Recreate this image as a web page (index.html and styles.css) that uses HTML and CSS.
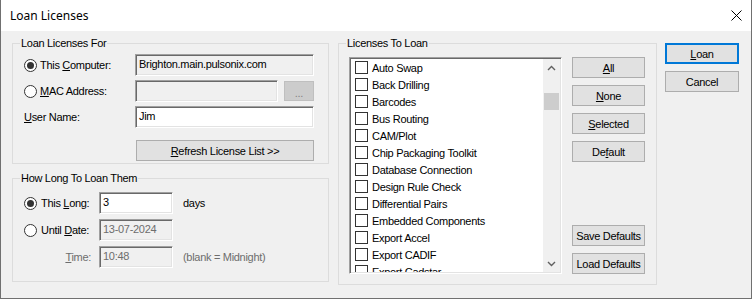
FILE: index.html
```html
<!DOCTYPE html>
<html>
<head>
<meta charset="utf-8">
<title>Loan Licenses</title>
<link rel="stylesheet" href="styles.css">
</head>
<body>
<div class="window">
  <div class="titlebar">
    <span class="title">Loan Licenses</span>
    <svg class="close" width="11" height="11" viewBox="0 0 11 11"><path d="M0.5 0.5 L10.5 10.5 M10.5 0.5 L0.5 10.5" stroke="#000" stroke-width="1"/></svg>
  </div>
  <div class="body">
    <div class="left">
      <fieldset class="group g1">
        <legend>Loan Licenses For</legend>
        <div class="inner form1">
          <div class="radio"><span class="rb on"></span><span>This <u>C</u>omputer:</span></div>
          <div class="field ro">Brighton.main.pulsonix.com</div>
          <div class="radio"><span class="rb"></span><span><u>M</u>AC Address:</span></div>
          <div class="macrow"><div class="field ro mac"></div><div class="btn dis">...</div></div>
          <div class="plain"><u>U</u>ser Name:</div>
          <div class="field">Jim</div>
          <div></div>
          <div class="btn refresh"><u>R</u>efresh License List &gt;&gt;</div>
        </div>
      </fieldset>
      <fieldset class="group g2">
        <legend>How Long To Loan Them</legend>
        <div class="inner form2">
          <div class="radio"><span class="rb on"></span><span>This <u>L</u>ong:</span></div>
          <div class="field">3</div>
          <div class="note">days</div>
          <div class="radio"><span class="rb"></span><span>Until <u>D</u>ate:</span></div>
          <div class="field ro grey">13-07-2024</div>
          <div></div>
          <div class="plain grey tlabel"><u>T</u>ime:</div>
          <div class="field ro grey">10:48</div>
          <div class="note grey">(blank = Midnight)</div>
        </div>
      </fieldset>
    </div>
    <fieldset class="group g3">
      <legend>Licenses To Loan</legend>
      <div class="inner lic">
        <div class="listbox">
          <div class="items">
            <div class="item"><span class="cb"></span>Auto Swap</div>
            <div class="item"><span class="cb"></span>Back Drilling</div>
            <div class="item"><span class="cb"></span>Barcodes</div>
            <div class="item"><span class="cb"></span>Bus Routing</div>
            <div class="item"><span class="cb"></span>CAM/Plot</div>
            <div class="item"><span class="cb"></span>Chip Packaging Toolkit</div>
            <div class="item"><span class="cb"></span>Database Connection</div>
            <div class="item"><span class="cb"></span>Design Rule Check</div>
            <div class="item"><span class="cb"></span>Differential Pairs</div>
            <div class="item"><span class="cb"></span>Embedded Components</div>
            <div class="item"><span class="cb"></span>Export Accel</div>
            <div class="item"><span class="cb"></span>Export CADIF</div>
            <div class="item"><span class="cb"></span>Export Cadstar</div>
          </div>
          <div class="scrollbar">
            <div class="arrow"><svg width="9" height="6" viewBox="0 0 9 6"><path d="M1 5 L4.5 1.5 L8 5" fill="none" stroke="#606060" stroke-width="1.4"/></svg></div>
            <div class="track"><div class="thumb"></div></div>
            <div class="arrow"><svg width="9" height="6" viewBox="0 0 9 6"><path d="M1 1 L4.5 4.5 L8 1" fill="none" stroke="#606060" stroke-width="1.4"/></svg></div>
          </div>
        </div>
        <div class="sidebtns">
          <div class="btngroup">
            <div class="btn"><u>A</u>ll</div>
            <div class="btn"><u>N</u>one</div>
            <div class="btn"><u>S</u>elected</div>
            <div class="btn">De<u>f</u>ault</div>
          </div>
          <div class="btngroup">
            <div class="btn">Save Defaults</div>
            <div class="btn">Load Defaults</div>
          </div>
        </div>
      </div>
    </fieldset>
    <div class="right">
      <div class="btn default"><u>L</u>oan</div>
      <div class="btn">Cancel</div>
    </div>
  </div>
</div>
</body>
</html>
```

FILE: styles.css
```css
* { box-sizing: border-box; }
html, body { margin: 0; padding: 0; }
body {
  width: 752px;
  height: 299px;
  overflow: hidden;
  background: #f0f0f0;
  font-family: "Liberation Sans", Arial, sans-serif;
  font-size: 11px;
  letter-spacing: -0.3px;
  color: #000;
}
u { text-decoration: underline; text-underline-offset: 1px; }

.window {
  width: 752px;
  height: 299px;
  border: 1px solid #707070;
  border-top: none;
  display: flex;
  flex-direction: column;
  background: #f0f0f0;
}
.titlebar {
  height: 31px;
  flex: none;
  background: #fff;
  display: flex;
  align-items: center;
  justify-content: space-between;
  padding: 0 9px 0 9px;
}
.title {
  font-family: "Noto Sans", "Liberation Sans", sans-serif;
  font-size: 12px;
  letter-spacing: 0;
  padding-bottom: 1px;
}
.close { display: block; margin-bottom: 1px; }

.body {
  flex: 1;
  display: flex;
  align-items: flex-start;
  padding: 6px 0 0 11px;
}
.left {
  width: 317px;
  display: flex;
  flex-direction: column;
  gap: 8px;
}

.group {
  margin: 0;
  padding: 0;
  border: 1px solid #dcdcdc;
  min-width: 0;
}
.group legend {
  margin-left: 7px;
  padding: 0 1px;
  height: 13px;
  line-height: 13px;
}

/* group 1 */
.form1 {
  display: grid;
  grid-template-columns: 111px 179px;
  grid-auto-rows: 22px;
  row-gap: 4px;
  padding: 4px 14px 9px 11px;
  align-items: center;
}
.radio { display: flex; align-items: center; height: 22px; }
.rb {
  width: 13px;
  height: 13px;
  border: 1px solid #333;
  border-radius: 50%;
  background: #fff;
  margin-right: 3px;
  flex: none;
  display: flex;
  align-items: center;
  justify-content: center;
}
.rb.on::after {
  content: "";
  width: 7px;
  height: 7px;
  border-radius: 50%;
  background: #333;
}
.plain { height: 22px; line-height: 22px; }

.field {
  height: 22px;
  border: 1px solid;
  border-color: #a0a0a0 #ffffff #ffffff #a0a0a0;
  box-shadow: inset 1px 1px 0 #696969, inset -1px -1px 0 #e3e3e3;
  background: #fff;
  padding: 0 3px;
  line-height: 19px;
  white-space: nowrap;
  overflow: hidden;
}
.field.ro { background: #f0f0f0; }
.grey { color: #6d6d6d; }

.macrow { display: flex; gap: 6px; align-items: center; }
.mac { width: 143px; }

.btn {
  height: 21px;
  border: 1px solid #adadad;
  background: #e1e1e1;
  display: flex;
  align-items: center;
  justify-content: center;
  white-space: nowrap;
}
.btn.dis {
  width: 30px;
  height: 20px;
  background: #cccccc;
  border-color: #bfbfbf;
  color: #838383;
  align-items: flex-end;
  padding-bottom: 2px;
  line-height: 10px;
}
.refresh { margin-top: 8px; width: 178px; margin-left: 1px; align-self: start; }

/* group 2 */
.form2 {
  display: grid;
  grid-template-columns: 75px 74px auto;
  grid-auto-rows: 22px;
  row-gap: 5px;
  padding: 7px 0 13px 11px;
  align-items: center;
}
.form2 .radio .rb { margin-right: 4px; }
.tlabel { justify-self: end; padding-right: 8px; }
.note { line-height: 22px; padding-left: 10px; }

/* group 3 */
.g3 { width: 319px; margin-left: 9px; }
.lic {
  display: flex;
  gap: 10px;
  padding: 7px 11px 10px 10px;
}
.listbox {
  width: 213px;
  height: 217px;
  border: 1px solid;
  border-color: #a0a0a0 #ffffff #ffffff #a0a0a0;
  box-shadow: inset 1px 1px 0 #696969, inset -1px -1px 0 #e3e3e3;
  background: #fff;
  padding: 1px;
  display: flex;
}
.items {
  flex: 1;
  overflow: hidden;
  padding-left: 4px;
}
.item {
  height: 17px;
  display: flex;
  align-items: center;
  white-space: nowrap;
}
.cb {
  width: 13px;
  height: 13px;
  border: 1px solid #333;
  background: #fff;
  margin-right: 4px;
  flex: none;
}
.scrollbar {
  width: 17px;
  background: #f0f0f0;
  display: flex;
  flex-direction: column;
}
.arrow {
  height: 17px;
  display: flex;
  align-items: center;
  justify-content: center;
  flex: none;
}
.track { flex: 1; }
.thumb {
  margin: 17px 1px 0 1px;
  height: 17px;
  background: #cdcdcd;
}
.sidebtns {
  width: 73px;
  display: flex;
  flex-direction: column;
  justify-content: space-between;
}
.btngroup { display: flex; flex-direction: column; gap: 7px; }

/* right */
.right {
  width: 74px;
  margin-left: 8px;
  padding-top: 6px;
  display: flex;
  flex-direction: column;
  gap: 7px;
}
.btn.default { border: 2px solid #0078d7; }
```
